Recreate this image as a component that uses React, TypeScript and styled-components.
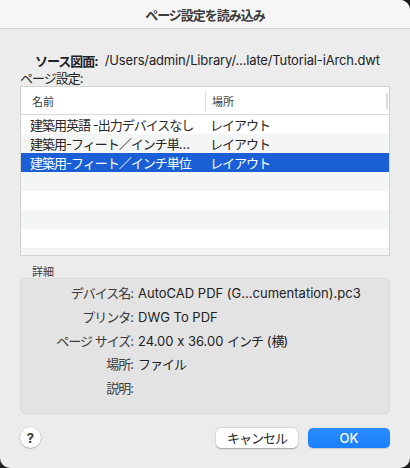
import React from 'react';
import styled, {createGlobalStyle} from "styled-components";

const GlobalStyle = createGlobalStyle`
  html, body {
    margin: 0;
    padding: 0;
    background: #1e1e1e;
  }
  body {
    font-family: "Inter", "Noto Sans CJK JP", sans-serif;
    font-feature-settings: "calt" 0;
    -webkit-font-smoothing: antialiased;
  }
`

const Jp = styled.span`
  letter-spacing: -1px;
`

const rows = [
  {name: "建築用英語 -出力デバイスなし", place: "レイアウト"},
  {name: "建築用-フィート／インチ単…", place: "レイアウト"},
  {name: "建築用-フィート／インチ単位", place: "レイアウト", selected: true},
  {name: "", place: ""},
  {name: "", place: ""},
  {name: "", place: ""},
  {name: "", place: ""},
  {name: "", place: ""},
];

const details: { label: string; value: React.ReactNode }[] = [
  {label: "デバイス名:", value: "AutoCAD PDF (G...cumentation).pc3"},
  {label: "プリンタ:", value: "DWG To PDF"},
  {label: "ページ サイズ:", value: <>24.00 x 36.00 <Jp>インチ</Jp> (<Jp>横</Jp>)</>},
  {label: "場所:", value: <Jp>ファイル</Jp>},
  {label: "説明:", value: ""},
];

const App = () => {
  return (
    <>
      <GlobalStyle/>
      <Window>
        <TitleBar>ページ設定を読み込み</TitleBar>

        <Content>
          <SourceLine>
            <b>ソース図面:</b>
            <span>/Users/admin/Library/...late/Tutorial-iArch.dwt</span>
          </SourceLine>
          <FieldLabel>ページ設定:</FieldLabel>

          <Table>
            <HeaderRow>
              <HeaderCell>名前</HeaderCell>
              <HeaderCell divider>場所</HeaderCell>
              <HeaderEnd/>
            </HeaderRow>
            <TableBody>
              {rows.map((r, i) => (
                <Row key={i} striped={i % 2 === 1} selected={!!r.selected}>
                  <NameCell>{r.name}</NameCell>
                  <PlaceCell>{r.place}</PlaceCell>
                </Row>
              ))}
            </TableBody>
          </Table>

          <SectionLabel>詳細</SectionLabel>
          <DetailBox>
            {details.map((d) => (
              <React.Fragment key={d.label}>
                <DetailLabel>{d.label}</DetailLabel>
                <DetailValue>{d.value}</DetailValue>
              </React.Fragment>
            ))}
          </DetailBox>

          <Footer>
            <HelpButton>?</HelpButton>
            <ButtonGroup>
              <Button>キャンセル</Button>
              <Button primary>OK</Button>
            </ButtonGroup>
          </Footer>
        </Content>
      </Window>
    </>
  );
};

const Window = styled.div`
  width: 410px;
  height: 468px;
  background: #ececec;
  border-radius: 0 10px 10px 10px;
  overflow: hidden;
  color: #262626;
  display: flex;
  flex-direction: column;
`

const TitleBar = styled.div`
  height: 28px;
  flex: none;
  background: #f6f6f6;
  border-bottom: 1px solid #d3d3d3;
  display: flex;
  align-items: center;
  justify-content: center;
  font-size: 13px;
  font-weight: 700;
  letter-spacing: -1px;
  color: #3c3c3c;
`

const Content = styled.div`
  padding: 22px 20px 0 20px;
  display: flex;
  flex-direction: column;
`

const SourceLine = styled.div`
  height: 18px;
  display: flex;
  align-items: center;
  gap: 7px;
  padding-left: 15px;
  font-size: 13px;
  color: #222;
  white-space: nowrap;

  b {
    font-weight: 700;
    letter-spacing: -1px;
  }

  span {
    letter-spacing: -0.15px;
  }
`

const FieldLabel = styled.div`
  height: 17px;
  display: flex;
  align-items: center;
  font-size: 13px;
  letter-spacing: -1px;
  color: #262626;
`

const Table = styled.div`
  border: 1px solid #d2d2d2;
  background: #ffffff;
  display: flex;
  flex-direction: column;
`

const HeaderRow = styled.div`
  height: 27px;
  display: grid;
  grid-template-columns: 184px 1fr 3px;
  align-items: center;
  border-bottom: 1px solid #d9d9d9;
`

const HeaderCell = styled.div<{ divider?: boolean }>`
  height: 22px;
  display: flex;
  align-items: center;
  padding-left: ${(props) => (props.divider ? "6px" : "11px")};
  border-left: ${(props) => (props.divider ? "1px solid #e0e0e0" : "none")};
  font-size: 11px;
  color: #3a3a3a;
`

const HeaderEnd = styled.div`
  height: 16px;
  width: 2px;
  background: #dcdcdc;
`

const TableBody = styled.div`
  height: 140px;
  overflow: hidden;
`

const Row = styled.div<{ striped: boolean; selected: boolean }>`
  height: 19px;
  display: grid;
  grid-template-columns: 184px 1fr;
  align-items: center;
  font-size: 13px;
  letter-spacing: -1px;
  background: ${(props) => (props.selected ? "#1a5fd6" : props.striped ? "#f4f5f5" : "#ffffff")};
  color: ${(props) => (props.selected ? "#ffffff" : "#262626")};
`

const NameCell = styled.div`
  padding-left: 9px;
  white-space: nowrap;
  overflow: hidden;
`

const PlaceCell = styled.div`
  padding-left: 5px;
  white-space: nowrap;
`

const SectionLabel = styled.div`
  margin-top: 8px;
  height: 14px;
  display: flex;
  align-items: center;
  padding-left: 12px;
  font-size: 11px;
  color: #3a3a3a;
`

const DetailBox = styled.div`
  height: 132px;
  padding-top: 2px;
  background: #e3e3e3;
  border: 1px solid #dadada;
  border-radius: 5px;
  display: grid;
  grid-template-columns: 112px 1fr;
  grid-auto-rows: 23.7px;
  align-content: start;
  column-gap: 5px;
  align-items: center;
  font-size: 13px;
`

const DetailLabel = styled.div`
  text-align: right;
  letter-spacing: -1px;
  color: #3a3a3a;
  white-space: nowrap;
`

const DetailValue = styled.div`
  color: #222;
  white-space: nowrap;
`

const Footer = styled.div`
  margin-top: 13px;
  display: flex;
  align-items: center;
  justify-content: space-between;
`

const HelpButton = styled.div`
  width: 21px;
  height: 21px;
  border-radius: 50%;
  background: #ffffff;
  box-shadow: 0 0.5px 1.5px rgba(0, 0, 0, 0.3), 0 0 0 0.5px rgba(0, 0, 0, 0.08);
  display: flex;
  align-items: center;
  justify-content: center;
  font-size: 13px;
  font-weight: 700;
  color: #333;
`

const ButtonGroup = styled.div`
  display: flex;
  gap: 10px;
`

const Button = styled.div<{ primary?: boolean }>`
  width: 82px;
  height: 20px;
  border-radius: 5px;
  display: flex;
  align-items: center;
  justify-content: center;
  font-size: 13px;
  letter-spacing: ${(props) => (props.primary ? "0" : "-1px")};
  font-weight: ${(props) => (props.primary ? 500 : 400)};
  color: ${(props) => (props.primary ? "#ffffff" : "#262626")};
  background: ${(props) => (props.primary ? "linear-gradient(#2a8cfc, #1a7ffa)" : "#ffffff")};
  box-shadow: ${(props) => (props.primary
    ? "0 0.5px 1px rgba(0, 0, 0, 0.15)"
    : "0 0.5px 1.5px rgba(0, 0, 0, 0.3), 0 0 0 0.5px rgba(0, 0, 0, 0.06)")};
`

export default App;
